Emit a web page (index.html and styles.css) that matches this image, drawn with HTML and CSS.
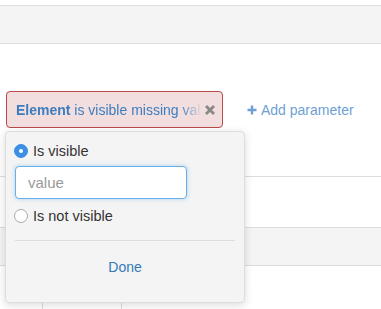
FILE: index.html
```html
<!DOCTYPE html>
<html lang="en">
<head>
    <meta charset="UTF-8">
    <title>Filters</title>
    <link rel="stylesheet" href="styles.css">
</head>
<body>
    <div class="toolbar"></div>

    <div class="filters">
        <div class="chip-wrap">
            <span class="chip">
                <span class="chip-text"><b>Element</b> is visible missing value</span>
                <svg class="chip-close" width="12" height="12" viewBox="0 0 12 12">
                    <path d="M2 2 L10 10 M10 2 L2 10" stroke="#888" stroke-width="2.8"/>
                </svg>
            </span>

            <div class="popover">
                <label class="option">
                    <span class="radio checked"></span>
                    Is visible
                </label>
                <input class="value-input" type="text" placeholder="value">
                <label class="option">
                    <span class="radio"></span>
                    Is not visible
                </label>
                <hr class="divider">
                <div class="done">Done</div>
            </div>
        </div>
        <a class="add-param" href="#">
            <svg width="10" height="10" viewBox="0 0 10 10">
                <path d="M5 0.5 V9.5 M0.5 5 H9.5" stroke="#6f9fd4" stroke-width="2.4"/>
            </svg>
            Add parameter
        </a>
    </div>

    <div class="spacer"></div>

    <div class="grid">
        <div class="grid-head"></div>
        <div class="grid-row">
            <div class="cell"></div>
            <div class="cell"></div>
            <div class="cell last"></div>
        </div>
    </div>
</body>
</html>
```

FILE: styles.css
```css
body {
    margin: 0;
    font-family: "Liberation Sans", Arial, sans-serif;
    font-size: 14px;
    color: #333;
    background-color: #fff;
}
.toolbar {
    margin-top: 5px;
    height: 37px;
    background-color: #f4f4f4;
    border-top: 1px solid #ddd;
    border-bottom: 1px solid #ddd;
}
.filters {
    box-sizing: border-box;
    height: 133px;
    padding: 47px 6px 0;
    border-bottom: 1px solid #ddd;
    display: flex;
    align-items: flex-start;
}
.chip-wrap {
    position: relative;
}
.chip {
    box-sizing: border-box;
    width: 217px;
    height: 37px;
    display: flex;
    align-items: center;
    padding: 0 6px 0 9px;
    background-color: #f2dede;
    border: 1px solid #b94a48;
    border-radius: 4px;
    color: #3b7dc0;
}
.chip-text {
    width: 186px;
    white-space: nowrap;
    overflow: hidden;
    -webkit-mask-image: linear-gradient(to right, #000 88%, transparent 100%);
    mask-image: linear-gradient(to right, #000 88%, transparent 100%);
}
.chip-close {
    margin-left: 2px;
}
.add-param {
    margin-left: 24px;
    height: 37px;
    display: flex;
    align-items: center;
    gap: 4px;
    color: #6f9fd4;
    text-decoration: none;
}
.popover {
    position: absolute;
    left: -1px;
    top: 40px;
    z-index: 10;
    box-sizing: border-box;
    width: 240px;
    height: 172px;
    padding: 9px 8px 0;
    background-color: #f4f4f4;
    border: 1px solid #ddd;
    border-radius: 4px;
    box-shadow: 0 2px 8px rgba(0, 0, 0, 0.15);
}
.option {
    display: flex;
    align-items: center;
    gap: 5px;
    height: 20px;
    font-size: 14.5px;
    color: #333;
}
.radio {
    box-sizing: border-box;
    width: 14px;
    height: 14px;
    border-radius: 50%;
    border: 1px solid #aaa;
    background-color: #fff;
    display: flex;
    align-items: center;
    justify-content: center;
}
.radio.checked {
    border-color: #3d8fe6;
    background-color: #3d8fe6;
}
.radio.checked::after {
    content: "";
    width: 4px;
    height: 4px;
    border-radius: 50%;
    background-color: #fff;
}
.value-input {
    box-sizing: border-box;
    display: block;
    width: 172px;
    height: 33px;
    margin: 5px 0 7px 1px;
    padding: 0 12px;
    font-family: inherit;
    font-size: 15px;
    border: 1px solid #66afe9;
    border-radius: 4px;
    box-shadow: 0 0 4px rgba(102, 175, 233, 0.5);
    outline: none;
}
.value-input::placeholder {
    color: #999;
}
.divider {
    margin: 14px 1px 0;
    border: none;
    border-top: 1px solid #ddd;
}
.done {
    margin-top: 18px;
    text-align: center;
    color: #337ab7;
}
.spacer {
    height: 50px;
    border-bottom: 1px solid #ddd;
}
.grid-head {
    height: 37px;
    background-color: #f4f4f4;
    border-bottom: 1px solid #ddd;
}
.grid-row {
    display: grid;
    grid-template-columns: 43px 79px 1fr;
    height: 43px;
}
.cell {
    border-right: 1px solid #ddd;
}
.cell.last {
    border-right: none;
}
```
